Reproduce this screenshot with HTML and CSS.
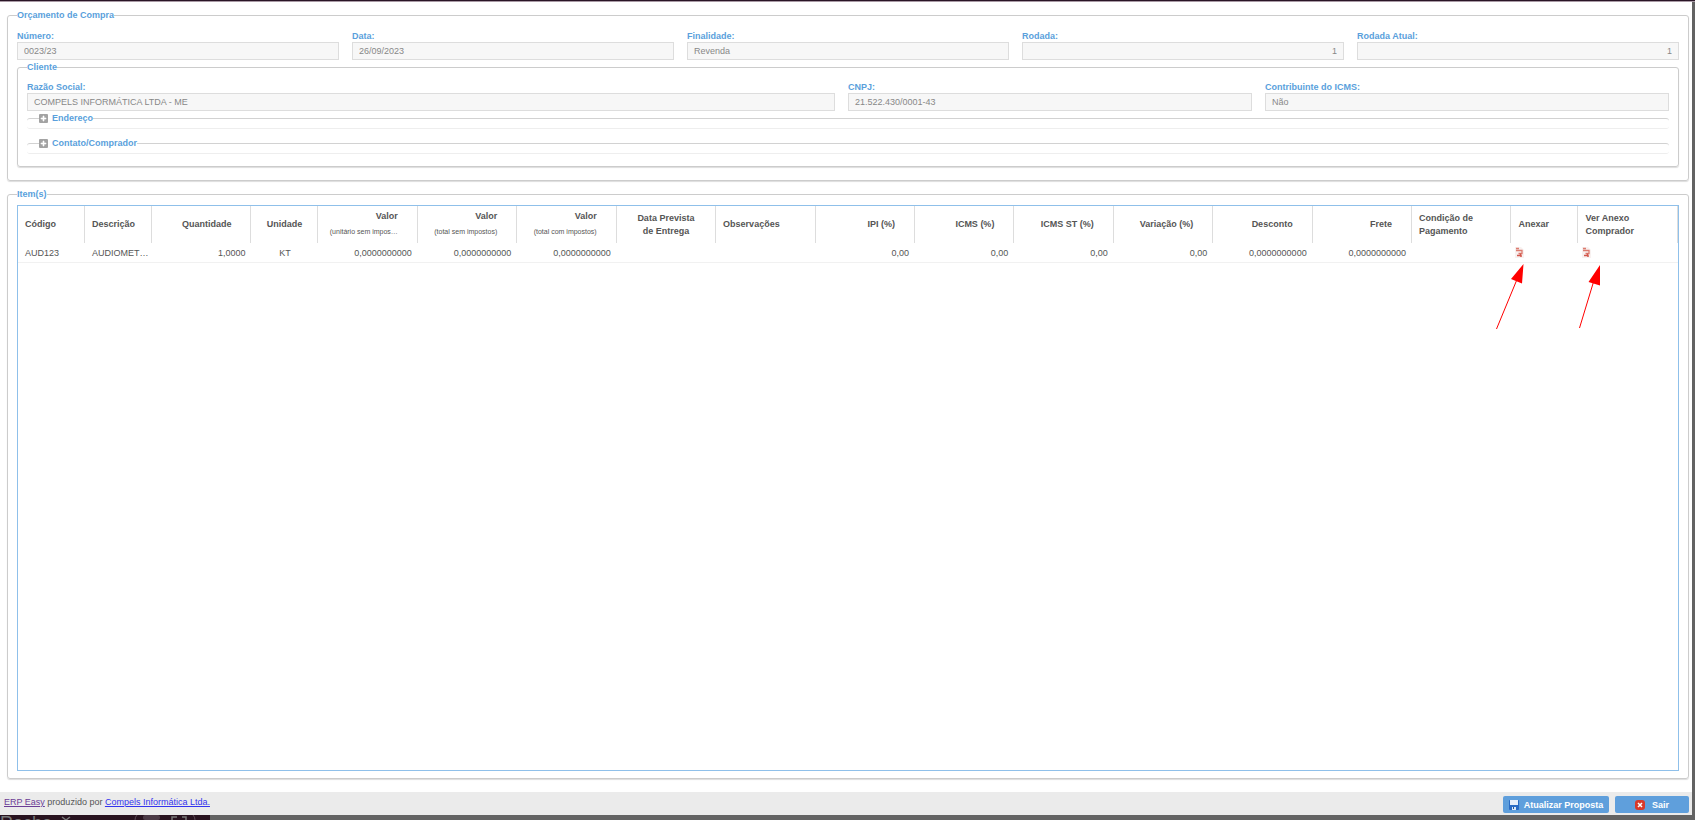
FILE: index.html
```html
<!DOCTYPE html>
<html lang="pt-BR">
<head>
  <meta charset="UTF-8" />
  <meta name="viewport" content="width=device-width, initial-scale=1.0"/>
  <title>Orçamento de Compra</title>
  <link rel="stylesheet" href="styles.css">
</head>
<body>

  <svg class="symbols" aria-hidden="true">
    <symbol id="plus" viewBox="0 0 9 9">
      <rect width="9" height="9" rx="1" fill="#a3a3a3"/>
      <path d="M4 2h1v2h2v1H5v2H4V5H2V4h2z" fill="#fff" stroke="#fff" stroke-width=".6"/>
    </symbol>
    <symbol id="pdf" viewBox="0 0 9 11">
      <path d="M0 0h6l3 3v8H0z" fill="#f8f1f0"/>
      <path d="M1 1.500h3M1 3.500h6v3H3.500" fill="none" stroke="#dc7c70" stroke-width="1.300"/>
      <path d="M2 8.500h4v1.500M5.500 6.500v2" fill="none" stroke="#d2584c" stroke-width="1.500"/>
    </symbol>
  </svg>

  <div class="top-strip"></div>

  <main class="window">
    <form class="content">
      <fieldset class="panel">
        <legend>Orçamento de Compra</legend>
        <div class="row five">
          <div class="field">
            <label for="numero">Número:</label>
            <input type="text" id="numero" value="0023/23" disabled />
          </div>
          <div class="field">
            <label for="data">Data:</label>
            <input type="text" id="data" value="26/09/2023" disabled />
          </div>
          <div class="field">
            <label for="finalidade">Finalidade:</label>
            <input type="text" id="finalidade" value="Revenda" disabled />
          </div>
          <div class="field">
            <label for="rodada">Rodada:</label>
            <input type="text" id="rodada" class="right" value="1" disabled />
          </div>
          <div class="field">
            <label for="rodadaAtual">Rodada Atual:</label>
            <input type="text" id="rodadaAtual" class="right" value="1" disabled />
          </div>
        </div>

        <fieldset class="panel cliente">
          <legend>Cliente</legend>
          <div class="row three">
            <div class="field">
              <label for="razao">Razão Social:</label>
              <input type="text" id="razao" value="COMPELS INFORMÁTICA LTDA - ME" disabled />
            </div>
            <div class="field">
              <label for="cnpj">CNPJ:</label>
              <input type="text" id="cnpj" value="21.522.430/0001-43" disabled />
            </div>
            <div class="field">
              <label for="icms">Contribuinte do ICMS:</label>
              <input type="text" id="icms" value="Não" disabled />
            </div>
          </div>
          <fieldset class="group">
            <legend><button type="button" class="toggle" aria-label="Expandir Endereço"><svg><use href="#plus"/></svg></button>Endereço</legend>
          </fieldset>
          <fieldset class="group">
            <legend><button type="button" class="toggle" aria-label="Expandir Contato/Comprador"><svg><use href="#plus"/></svg></button>Contato/Comprador</legend>
          </fieldset>
        </fieldset>
      </fieldset>

      <fieldset class="panel items">
        <legend>Item(s)</legend>
        <div class="grid">
          <table>
            <colgroup>
              <col class="small"><col class="small"><col><col class="small">
              <col span="12">
              <col class="small"><col>
            </colgroup>
            <thead>
              <tr>
                <th>Código</th>
                <th>Descrição</th>
                <th class="num">Quantidade</th>
                <th class="mid">Unidade</th>
                <th class="num">Valor<small>(unitário sem impos…</small></th>
                <th class="num">Valor<small>(total sem impostos)</small></th>
                <th class="num">Valor<small>(total com impostos)</small></th>
                <th class="mid">Data Prevista<br>de Entrega</th>
                <th>Observações</th>
                <th class="num">IPI (%)</th>
                <th class="num">ICMS (%)</th>
                <th class="num">ICMS ST (%)</th>
                <th class="num">Variação (%)</th>
                <th class="num">Desconto</th>
                <th class="num">Frete</th>
                <th>Condição de<br>Pagamento</th>
                <th>Anexar</th>
                <th>Ver Anexo<br>Comprador</th>
              </tr>
            </thead>
            <tbody>
              <tr>
                <td>AUD123</td>
                <td>AUDIOMET…</td>
                <td class="num">1,0000</td>
                <td class="mid">KT</td>
                <td class="num">0,0000000000</td>
                <td class="num">0,0000000000</td>
                <td class="num">0,0000000000</td>
                <td></td>
                <td></td>
                <td class="num">0,00</td>
                <td class="num">0,00</td>
                <td class="num">0,00</td>
                <td class="num">0,00</td>
                <td class="num">0,0000000000</td>
                <td class="num">0,0000000000</td>
                <td></td>
                <td class="icon"><button type="button" class="file" aria-label="Anexar"><svg><use href="#pdf"/></svg></button></td>
                <td class="icon"><button type="button" class="file" aria-label="Ver anexo"><svg><use href="#pdf"/></svg></button></td>
              </tr>
            </tbody>
          </table>
          <svg class="arrows" viewBox="0 0 110 70" aria-hidden="true">
            <path d="M3.500 67 L25 15 M86.500 66 L102 15" stroke="#f00" fill="none"/>
            <path d="M30.500 2 L18 17 L29 21.500 Z M107 3 L95.500 20 L107 23.500 Z" fill="#f00"/>
          </svg>
        </div>
      </fieldset>
    </form>

    <footer>
      <p><a href="#" class="visited">ERP Easy</a> produzido por <a href="#">Compels Informática Ltda.</a></p>
      <div class="actions">
        <button type="button" class="btn save">
          <svg viewBox="0 0 10 10">
            <rect width="10" height="10" rx="1" fill="#2b6cc4"/>
            <rect x="1" width="8" height="5" fill="#e8f0fa"/>
            <rect x="3" y="7" width="4" height="3" fill="#dce8f6"/>
            <rect x="4" y="7" width="1" height="2" fill="#24589f"/>
          </svg>
          Atualizar Proposta
        </button>
        <button type="button" class="btn exit">
          <svg viewBox="0 0 10 10">
            <rect width="10" height="10" rx="3" fill="#d8392b"/>
            <path d="M3 3l4 4M7 3l-4 4" stroke="#fff" stroke-width="1.500"/>
          </svg>
          Sair
        </button>
      </div>
    </footer>
  </main>

  <div class="bottom-strip">
    <div class="tab">
      <span>Rocha</span>
      <svg viewBox="0 0 145 5" aria-hidden="true">
        <path d="M2 2l4 3l4-3" fill="none" stroke="#777" stroke-width="1.500"/>
        <path d="M77 0q-2 2-2 5M133 0q2 2 2 5" fill="none" stroke="#5c4a56"/>
        <rect x="83" width="17" height="5" rx="2" fill="#4b3a46"/>
        <path d="M112 5V2h5M122 2h4v3" fill="none" stroke="#777" stroke-width="1.500"/>
      </svg>
    </div>
  </div>

</body>
</html>
```
FILE: styles.css
```css
* {
  box-sizing: border-box;
}

body {
  font-family: "Liberation Sans", Arial, sans-serif;
  font-size: 9px;
  line-height: 12px;
  margin: 0;
  min-height: 100vh;
  display: flex;
  flex-direction: column;
  color: #555;
  background-color: #636363;
}

.symbols {
  display: none;
}

svg {
  display: block;
}

.top-strip {
  height: 2px;
  background-color: #2a1526;
  border-bottom: 1px solid #a99aa5;
}

.window {
  flex: 1;
  display: flex;
  flex-direction: column;
  margin-right: 3px;
  background-color: #fff;
}

.content {
  flex: 1;
  display: flex;
  flex-direction: column;
  gap: 7px;
  padding: 7px 3px 13px 7px;
}

fieldset {
  margin: 0;
  min-width: 0;
}

.panel {
  border: 1px solid #ccc;
  border-radius: 3px;
  box-shadow: 0 1px 1px #ddd;
  padding: 9px 9px 13px;
}

legend {
  padding: 0;
  font-weight: bold;
  line-height: 12px;
  color: #5a9fdc;
}

.cliente {
  margin-top: 1px;
  padding: 8px 9px 12px;
}

.row {
  display: grid;
  gap: 13px;
}

.five {
  grid-template-columns: repeat(5, 1fr);
}

.three {
  grid-template-columns: 2fr 1fr 1fr;
  margin-bottom: 1px;
}

.field {
  display: flex;
  flex-direction: column;
  min-width: 0;
}

label {
  font-weight: bold;
  line-height: 12px;
  color: #5a9fdc;
}

input {
  width: 100%;
  height: 18px;
  border: 1px solid #ddd;
  background-color: #f7f7f7;
  color: #888;
  font-family: inherit;
  font-size: 9px;
  padding: 0 6px;
}

.right {
  text-align: right;
}

.group {
  border: 1px solid #d2d2d2;
  border-width: 1px 0;
  border-bottom-color: #eee;
  border-radius: 3px;
  height: 17px;
  margin-bottom: 8px;
  padding: 0 12px;
}

.group:last-child {
  margin-bottom: 0;
}

.group legend {
  display: flex;
  align-items: center;
}

.toggle,
.file {
  border: none;
  padding: 0;
  background: none;
  cursor: pointer;
}

.toggle {
  margin-right: 4px;
}

.toggle svg {
  width: 9px;
  height: 9px;
}

.items {
  flex: 1;
  padding: 5px 9px 7px;
}

.grid {
  position: relative;
  min-height: calc(100vh - 254px);
  border: 1px solid #8fc0ea;
}

table {
  width: 100%;
  table-layout: fixed;
  border-collapse: separate;
  border-spacing: 0;
}

.small {
  width: 67px;
}

th, td {
  text-align: left;
  overflow: hidden;
  white-space: nowrap;
  padding: 0 4px 0 7px;
}

th {
  height: 37px;
  line-height: 13px;
  border-right: 1px solid #ddd;
  vertical-align: middle;
}

td {
  height: 20px;
  border-bottom: 1px solid #f1f1f1;
}

th.num {
  text-align: right;
  padding-right: 19px;
}

td.num {
  text-align: right;
  padding-right: 6px;
}

th.mid,
td.mid {
  text-align: center;
  padding: 0 6px;
}

td.icon {
  padding-left: 4px;
}

th small {
  display: block;
  font-size: 7px;
  font-weight: normal;
  line-height: 17px;
}

.file {
  display: block;
}

.file svg {
  width: 9px;
  height: 11px;
}

/* red pointers over the attachment buttons */
.arrows {
  position: absolute;
  top: 56px;
  right: 75px;
  width: 110px;
  height: 70px;
}

footer {
  display: flex;
  justify-content: space-between;
  height: 23px;
  padding: 4px 3px 2px 4px;
  background-color: #ebebeb;
}

footer p {
  margin: 0;
}

footer a {
  color: #33e;
}

footer .visited {
  color: #6b3d96;
}

.actions {
  display: flex;
  gap: 6px;
}

.btn {
  display: flex;
  align-items: center;
  justify-content: center;
  border: none;
  border-radius: 2px;
  background-color: #5f9fdc;
  color: #fff;
  font-family: inherit;
  font-size: 9px;
  font-weight: bold;
  padding: 0;
  cursor: pointer;
}

.btn svg {
  width: 10px;
  height: 10px;
  margin-right: 5px;
}

.save {
  width: 106px;
}

.exit {
  width: 74px;
}

.exit svg {
  margin-right: 7px;
}

.bottom-strip {
  height: 5px;
  overflow: hidden;
}

.tab {
  display: flex;
  justify-content: space-between;
  width: 210px;
  height: 5px;
  background-color: #28131f;
  color: #777;
  font-size: 18px;
  line-height: 16px;
}

.tab svg {
  width: 155px;
  height: 5px;
}
```
